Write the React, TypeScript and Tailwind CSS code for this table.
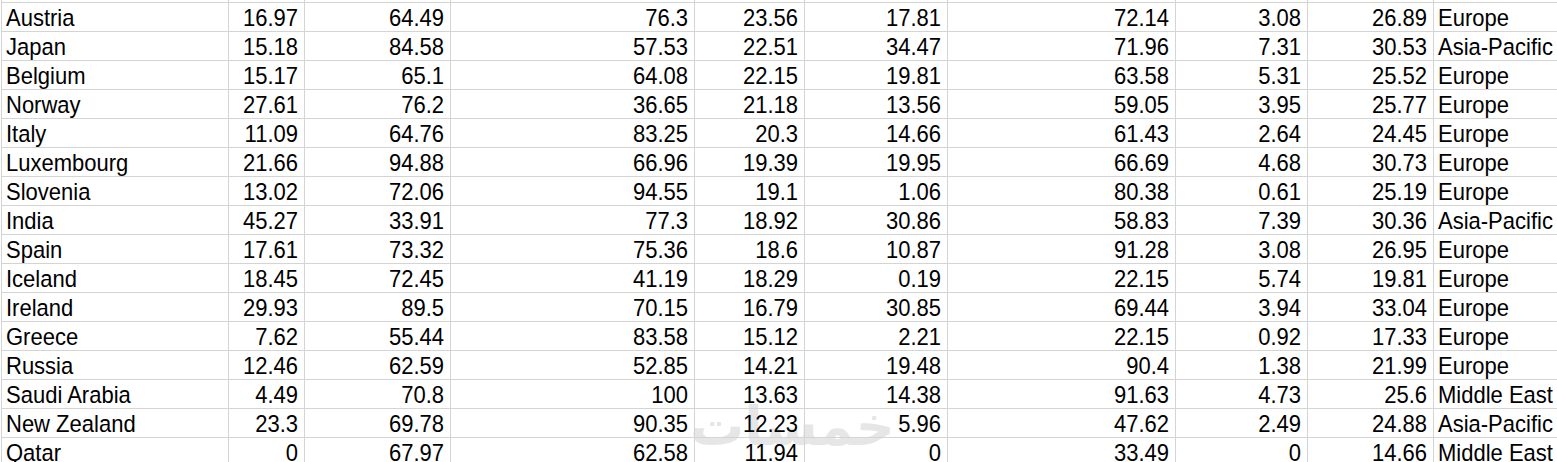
import React from "react";

type Row = [string, string, string, string, string, string, string, string, string, string];

const rows: Row[] = [
  ["Austria", "16.97", "64.49", "76.3", "23.56", "17.81", "72.14", "3.08", "26.89", "Europe"],
  ["Japan", "15.18", "84.58", "57.53", "22.51", "34.47", "71.96", "7.31", "30.53", "Asia-Pacific"],
  ["Belgium", "15.17", "65.1", "64.08", "22.15", "19.81", "63.58", "5.31", "25.52", "Europe"],
  ["Norway", "27.61", "76.2", "36.65", "21.18", "13.56", "59.05", "3.95", "25.77", "Europe"],
  ["Italy", "11.09", "64.76", "83.25", "20.3", "14.66", "61.43", "2.64", "24.45", "Europe"],
  ["Luxembourg", "21.66", "94.88", "66.96", "19.39", "19.95", "66.69", "4.68", "30.73", "Europe"],
  ["Slovenia", "13.02", "72.06", "94.55", "19.1", "1.06", "80.38", "0.61", "25.19", "Europe"],
  ["India", "45.27", "33.91", "77.3", "18.92", "30.86", "58.83", "7.39", "30.36", "Asia-Pacific"],
  ["Spain", "17.61", "73.32", "75.36", "18.6", "10.87", "91.28", "3.08", "26.95", "Europe"],
  ["Iceland", "18.45", "72.45", "41.19", "18.29", "0.19", "22.15", "5.74", "19.81", "Europe"],
  ["Ireland", "29.93", "89.5", "70.15", "16.79", "30.85", "69.44", "3.94", "33.04", "Europe"],
  ["Greece", "7.62", "55.44", "83.58", "15.12", "2.21", "22.15", "0.92", "17.33", "Europe"],
  ["Russia", "12.46", "62.59", "52.85", "14.21", "19.48", "90.4", "1.38", "21.99", "Europe"],
  ["Saudi Arabia", "4.49", "70.8", "100", "13.63", "14.38", "91.63", "4.73", "25.6", "Middle East"],
  ["New Zealand", "23.3", "69.78", "90.35", "12.23", "5.96", "47.62", "2.49", "24.88", "Asia-Pacific"],
  ["Qatar", "0", "67.97", "62.58", "11.94", "0", "33.49", "0", "14.66", "Middle East"],
];

const gridCols =
  "grid grid-cols-[227px_76px_146px_244px_110px_143px_228px_132px_126px_240px]";

function Cell({ value, col }: { value: string; col: number }) {
  const isText = col === 0 || col === 9;
  return (
    <div
      className={
        "h-[29px] border-r border-b border-[#d4d4d4] flex items-center overflow-hidden whitespace-nowrap " +
        (isText ? "justify-start pl-[4px]" : "justify-end pr-[6px]")
      }
    >
      <span className="inline-block translate-y-px scale-y-112 leading-none text-[22px] text-black">
        {value}
      </span>
    </div>
  );
}

export default function App() {
  return (
    <div
      className="relative h-[462px] w-[1557px] overflow-hidden bg-white"
      style={{ fontFamily: '"Liberation Sans", Arial, sans-serif' }}
    >
      <div
        className="absolute left-[690px] top-[400px] text-[54px] font-bold leading-none text-[#e6e6e6] select-none"
        style={{ fontFamily: '"DejaVu Sans", sans-serif' }}
        dir="rtl"
      >
        خمسات
      </div>
      <div className="relative ml-px border-l border-[#d4d4d4]">
        <div className={gridCols}>
          {Array.from({ length: 10 }).map((_, i) => (
            <div key={i} className="h-[3px] border-r border-b border-[#d4d4d4]" />
          ))}
          {rows.map((r) =>
            r.map((v, c) => <Cell key={r[0] + c} value={v} col={c} />)
          )}
        </div>
      </div>
    </div>
  );
}
